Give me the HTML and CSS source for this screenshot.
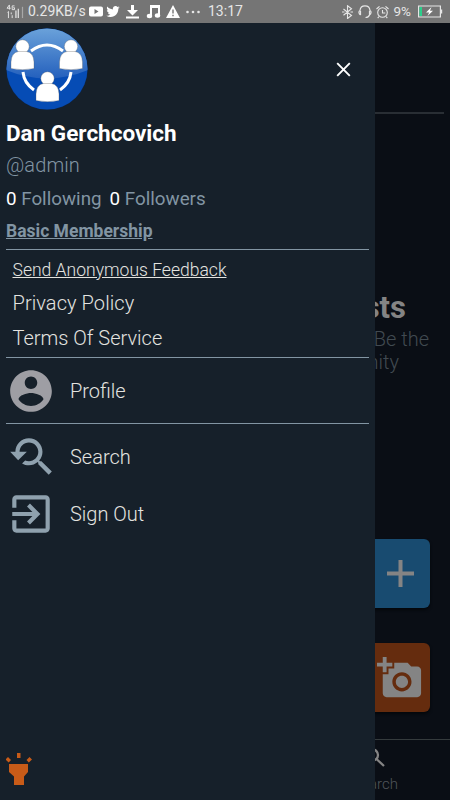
FILE: index.html
```html
<!DOCTYPE html>
<html lang="en">
<head>
<meta charset="utf-8">
<title>Menu</title>
<link rel="stylesheet" href="styles.css">
</head>
<body>
<header class="status">
  <svg class="signal" viewBox="0 0 19 16"><g fill="none" stroke="currentColor"><path d="M3.5 1L1 4.5h4M3.5 1v5M9 2H6.500v4H9V4H7.500M2.500 8v7M1.500 9l1-1M6.500 12v3"/><path d="M10.500 7v8M13 5v10" stroke-width="1.300"/><path d="M5.500 9v2" /><path d="M17.500 3v12" opacity=".45" stroke-width="1.300"/></g></svg>
  <span class="rate">0.29KB/s</span>
  <svg class="tube" viewBox="0 0 14 12"><path fill="currentColor" fill-rule="evenodd" d="M2 1h10q2 0 2 2v6q0 2-2 2H2q-2 0-2-2V3q0-2 2-2zm3.500 2.500v5L9.500 6z"/></svg>
  <svg class="bird" viewBox="1 3 22 19"><path fill="currentColor" d="M22.460 6c-.77.350-1.600.580-2.460.690.880-.53 1.560-1.370 1.880-2.380-.83.500-1.750.850-2.720 1.050C18.370 4.500 17.260 4 16 4c-2.350 0-4.270 1.920-4.270 4.290 0 .340.040.670.110.980C8.280 9.090 5.110 7.380 3 4.790c-.37.630-.58 1.370-.58 2.150 0 1.490.750 2.810 1.910 3.560-.71 0-1.370-.2-1.950-.5v.030c0 2.080 1.480 3.820 3.440 4.210a4.200 4.200 0 0 1-1.930.070 4.280 4.280 0 0 0 4 2.980 8.520 8.520 0 0 1-5.330 1.840c-.34 0-.68-.02-1.020-.06C3.440 20.290 5.700 21 8.120 21 16 21 20.330 14.460 20.330 8.790c0-.19 0-.37-.01-.56.840-.6 1.560-1.360 2.140-2.230z"/></svg>
  <svg class="download" viewBox="0 0 13 15"><path fill="currentColor" d="M5 1h3v5h4l-5.500 5.500L1 6h4zM0 12.500h13v2H0z"/></svg>
  <svg class="note" viewBox="0 0 15 15"><path fill="none" stroke="currentColor" stroke-width="2" d="M5 12V2h8v9M5 3h8"/><g fill="currentColor"><ellipse cx="3.500" cy="12" rx="2.700" ry="2.200"/><ellipse cx="11.500" cy="11.500" rx="2.700" ry="2.200"/></g></svg>
  <svg class="warn" viewBox="0 0 14 13"><path fill="currentColor" fill-rule="evenodd" d="M7 0l7 13H0zM6.300 4.500v4h1.400v-4zm0 5.200v1.500h1.400V9.700z"/></svg>
  <svg class="dots" viewBox="0 0 14 4"><g fill="currentColor"><circle cx="1.500" cy="2" r="1.300"/><circle cx="7" cy="2" r="1.300"/><circle cx="12.500" cy="2" r="1.300"/></g></svg>
  <span class="clock">13:17</span>
  <svg class="blue" viewBox="0 0 11 14"><path fill="none" stroke="currentColor" stroke-width="1.100" d="M1.500 4l8 6.500-4 3V.700l4 3-8 6.500M0 7h2.500M8.500 7H11"/></svg>
  <svg class="head" viewBox="0 0 14 14"><path fill="none" stroke="currentColor" stroke-width="1.200" d="M2.500 10C.5 9 .5 6 2 5.500 2.500-.6 11.500-.6 12 5.500c1.500.5 1.500 3.500-.5 4.500V6M2.500 6v4M11.500 10q-1 2.500-4 2.500"/></svg>
  <svg class="alarm" viewBox="0 0 13 14"><g fill="none" stroke="currentColor" stroke-width="1.100"><circle cx="6.500" cy="7.500" r="4.800"/><path d="M6.500 5v3h2.800M.5 4L3.500 1.300M12.500 4l-3-2.700M3 11.500l-1.300 1.700M10 11.500l1.300 1.700"/></g></svg>
  <span class="percent">9%</span>
  <svg class="battery" viewBox="0 0 25 13"><path fill="none" stroke="currentColor" stroke-width="1.200" d="M.6 1h21.800v11H.6zM23.600 4.500v4"/><path fill="#2bcf8b" d="M1.500 2h2.500v9H1.500z"/><path fill="#fff" d="M13.500 2L8 7.500h3.200L9.500 11 15 5.800h-3z"/></svg>
</header>
<div class="app">
  <nav class="drawer">
    <div class="top">
      <svg class="avatar" viewBox="0 0 82 82">
        <defs>
          <linearGradient id="shine" x1="0" y1="0" x2="0" y2="1"><stop offset="0" stop-color="#6ba2da"/><stop offset="1" stop-color="#2460bd"/></linearGradient>
          <clipPath id="disc"><circle cx="41" cy="41" r="40.500"/></clipPath>
          <g id="person"><circle r="6.700" cy="-7.500"/><path d="M-11.500 14.500V8Q-11-1.500-4-2.500H4Q11-1.500 11.500 8v6.500Q0 17-11.500 14.500z"/></g>
        </defs>
        <circle cx="41" cy="41" r="41" fill="#10233f"/>
        <g clip-path="url(#disc)"><path fill="#064cb5" d="M0 0h82v82H0z"/><path fill="url(#shine)" d="M0 0h82v42Q41 59 0 42z"/></g>
        <path fill="none" stroke="#fff" stroke-width="3" d="M25 23q16-12 32 0M17 44q1 11 11 18M65 44q-1 11-11 18"/>
        <g fill="#fff" stroke="#555" stroke-opacity=".5" stroke-width=".6"><use href="#person" x="16.500" y="26"/><use href="#person" x="65" y="26"/><use href="#person" x="41.500" y="58"/></g>
      </svg>
      <svg class="close" viewBox="0 0 15 15"><path fill="none" stroke="#fff" stroke-width="1.900" d="M1.200 1.200l12.600 12.600M13.800 1.200L1.200 13.800"/></svg>
    </div>
    <h1 class="name"><span>Dan Gerchcovich</span></h1>
    <p class="handle">@admin</p>
    <p class="counts"><span class="count"><b>0</b> Following</span><span class="count"><b>0</b> Followers</span></p>
    <a class="member">Basic Membership</a>
    <div class="links">
      <a class="feedback">Send Anonymous Feedback</a>
      <a class="privacy">Privacy Policy</a>
      <a class="terms">Terms Of Service</a>
    </div>
    <a class="item profile"><svg viewBox="0 0 24 24"><path fill="currentColor" d="M12 2C6.480 2 2 6.480 2 12s4.480 10 10 10 10-4.480 10-10S17.520 2 12 2zm0 3c1.660 0 3 1.340 3 3s-1.340 3-3 3-3-1.340-3-3 1.340-3 3-3zm0 14.200c-2.500 0-4.710-1.280-6-3.220.03-1.990 4-3.080 6-3.080 1.990 0 5.970 1.090 6 3.080-1.290 1.940-3.500 3.220-6 3.220z"/></svg><span>Profile</span></a>
    <a class="item search"><svg viewBox="0 0 24 24"><path fill="currentColor" d="M17.010 14h-.8l-.27-.27c.98-1.140 1.570-2.610 1.570-4.230 0-3.590-2.910-6.500-6.500-6.500s-6.500 3-6.500 6.500H2l3.840 4 4.160-4H6.510C6.510 7 8.530 5 11.010 5s4.500 2.010 4.500 4.500c0 2.480-2.020 4.500-4.500 4.500-.65 0-1.260-.14-1.820-.38L7.710 15.100c.97.57 2.090.9 3.300.9 1.610 0 3.080-.59 4.220-1.570l.27.27v.79l5.010 4.990L22 19l-4.990-5z"/></svg><span>Search</span></a>
    <a class="item signout"><svg viewBox="0 0 24 24"><path fill="currentColor" d="M10.090 15.590L11.500 17l5-5-5-5-1.410 1.410L12.670 11H3v2h9.670l-2.580 2.590zM19 3H5c-1.110 0-2 .9-2 2v4h2V5h14v14H5v-4H3v4c0 1.100.89 2 2 2h14c1.100 0 2-.9 2-2V5c0-1.100-.9-2-2-2z"/></svg><span>Sign Out</span></a>
    <svg class="torch" viewBox="0 0 28 33"><g fill="#c85b18"><path d="M3 11h19v8l-4 4.500V32H8v-8.500L3 19zM11 0h3.500v5H11z"/><path d="M-.5 6.500L2 4l3 3-2.300 2.500zM26 6.500L23.500 4l-3 3 2.300 2.500z"/></g></svg>
  </nav>
  <main class="page">
    <div class="bar"></div>
    <h2 class="title">sts</h2>
    <p class="lead">Be the</p>
    <p class="lead second">nity</p>
    <a class="tile add"><svg viewBox="0 0 27 27"><path stroke="currentColor" stroke-width="4" d="M13.500 0v27M0 13.500h27"/></svg></a>
    <a class="tile photo"><svg viewBox="0 0 24 24"><path fill="currentColor" d="M3 4V1h2v3h3v2H5v3H3V6H0V4h3zm3 6V7h3V4h7l1.830 2H21c1.100 0 2 .9 2 2v12c0 1.100-.9 2-2 2H5c-1.100 0-2-.9-2-2V10h3zm7 9c2.760 0 5-2.240 5-5s-2.240-5-5-5-5 2.240-5 5 2.240 5 5 5zm-3.200-5c0 1.770 1.430 3.200 3.200 3.200s3.200-1.430 3.200-3.200-1.430-3.200-3.200-3.200-3.200 1.430-3.200 3.200z"/></svg></a>
    <div class="tab"><svg viewBox="0 0 19 19"><path fill="none" stroke="currentColor" stroke-width="2.300" d="M12 7A5.500 5.500 0 1 1 1 7a5.500 5.500 0 0 1 11 0zM10.500 11l7.500 7"/></svg><span>arch</span></div>
  </main>
</div>
</body>
</html>
```
FILE: styles.css
```css
* { box-sizing: border-box; margin: 0; padding: 0; }
body {
  width: 450px; height: 800px; overflow: hidden;
  display: flex; flex-direction: column;
  background: #0a0e15; color: #e4e4e0;
  font-family: Roboto, "Noto Sans", sans-serif;
}
svg { display: block; flex: none; }
span { white-space: nowrap; }
.status {
  height: 23px; flex: none; display: flex; align-items: center;
  background: #757575; color: #e6e6e6; padding-left: 6px;
  font-size: 14px; line-height: 23px;
}
.signal { width: 18px; height: 15px; }
.rate { width: 60px; margin-left: 4px; }
.tube { width: 14px; height: 13px; margin-left: 1px; color: #fff; }
.bird { width: 14px; height: 13px; margin-left: 3px; color: #fff; }
.download { width: 13px; height: 15px; margin-left: 6px; color: #fff; }
.note { width: 15px; height: 15px; margin-left: 7px; color: #fff; }
.warn { width: 14px; height: 13px; margin-left: 5px; color: #fff; }
.dots { width: 14px; height: 4px; margin-left: 6px; }
.clock { width: 35px; margin-left: 8px; }
.blue { width: 11px; height: 14px; margin-left: 99px; }
.head { width: 14px; height: 14px; margin-left: 5px; }
.alarm { width: 13px; height: 14px; margin-left: 4px; }
.percent { width: 20px; margin-left: 4.500px; font-size: 13.500px; }
.battery { width: 25px; height: 13px; margin-left: 4.500px; }

.app { flex: 1; display: grid; grid-template-columns: 375px 75px; min-height: 0; }
.drawer { background: #16202a; padding: 5px 6px 0; display: flex; flex-direction: column; overflow: hidden; }
.top { display: flex; justify-content: space-between; align-items: center; height: 82px; padding-right: 18px; }
.avatar { width: 82px; height: 82px; }
.close { width: 15px; height: 15px; }
.name { height: 46px; line-height: 46px; font-size: 22.500px; font-weight: 700; color: #fff; }
.handle { height: 18px; line-height: 18px; font-size: 20px; font-weight: 300; color: #8295a3; letter-spacing: .1px; }
.counts { height: 49px; line-height: 50px; display: flex; gap: 8px; font-size: 18.800px; color: #8295a3; }
.counts b { color: #fff; font-weight: 400; }
.member { height: 26px; line-height: 16px; font-size: 17.500px; font-weight: 700; color: #8295a3; text-decoration: underline; }
.links { display: flex; flex-direction: column; height: 109px; border-top: 1px solid #8295a3; border-bottom: 1px solid #8295a3; padding-left: 6.500px; font-weight: 300; font-size: 20px; }
.feedback { height: 38px; line-height: 40px; font-size: 17.550px; text-decoration: underline; }
.privacy { height: 32px; line-height: 30px; letter-spacing: .08px; }
.terms { height: 36px; line-height: 36px; }
.item { display: flex; align-items: center; font-size: 20px; font-weight: 300; }
.item svg { width: 50px; height: 50px; color: #8fa1ae; }
.item span { margin-left: 14px; }
.profile { height: 66px; border-bottom: 1px solid #8295a3; }
.profile svg { color: #9e9ea4; }
.search { height: 65px; }
.signout { height: 50px; }
.torch { width: 28px; height: 33px; margin-top: auto; margin-bottom: 14px; }

.page { overflow: hidden; display: flex; flex-direction: column; align-items: flex-end; background: #0a0e15; color: #848484; }
.bar { width: 75px; height: 91px; flex: none; border-bottom: 2px solid #292e34; margin-right: 6px; }
.title { height: 34px; line-height: 34px; margin: 177px 44px 0 0; font-size: 31px; font-weight: 700; }
.lead { height: 24px; line-height: 24px; margin: 2px 21px 0 0; font-size: 20px; font-weight: 300; color: #414a51; white-space: nowrap; }
.lead.second { margin: -1px 51px 0 0; }
.tile { display: flex; align-items: center; height: 69px; width: 68px; border-radius: 6px; margin-right: 20px; box-shadow: 0 2px 3px #04070b; flex: none; }
.add { background: #184b70; margin-top: 164.500px; padding-left: 25px; }
.add svg { width: 27px; height: 27px; }
.photo { background: #652c0e; margin-top: 35.500px; padding-left: 14.500px; }
.photo svg { width: 46px; height: 46px; }
.tab { width: 75px; height: 61px; margin-top: auto; border-top: 1px solid #353b3d; display: flex; flex-direction: column; align-items: flex-end; font-size: 15px; font-weight: 300; color: #50555a; flex: none; }
.tab svg { width: 19px; height: 19px; margin: 8px 65px 0 0; color: #848484; }
.tab span { line-height: 18px; margin: 8px 52px 0 0; }
```
